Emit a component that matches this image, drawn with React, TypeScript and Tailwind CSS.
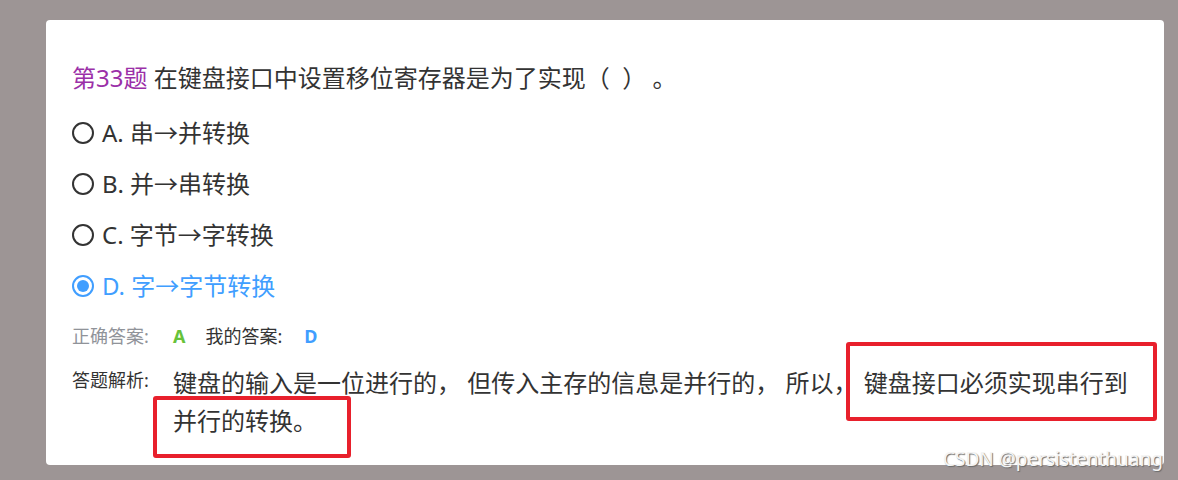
import React from 'react';

const options = [
  { key: 'A', text: '串→并转换' },
  { key: 'B', text: '并→串转换' },
  { key: 'C', text: '字节→字转换' },
  { key: 'D', text: '字→字节转换' },
];

function Radio({ checked }: { checked: boolean }) {
  if (checked) {
    return (
      <span className="w-[22px] h-[22px] rounded-full border-2 border-[#409eff] flex items-center justify-center shrink-0">
        <span className="w-[12px] h-[12px] rounded-full bg-[#409eff]"></span>
      </span>
    );
  }
  return <span className="w-[22px] h-[22px] rounded-full border-2 border-[#333333] shrink-0"></span>;
}

export default function App() {
  const mine = 'D';
  return (
    <div
      className="relative w-full h-[480px] bg-[#9d9595] pt-[20px] pl-[46px] overflow-hidden"
      style={{ fontFamily: '"Noto Sans", "Noto Sans CJK SC", sans-serif' }}
    >
      <div className="w-[1118px] h-[445px] bg-white rounded-[4px] pt-[40px] pl-[26px] pr-[24px]">
        <div className="text-[24px] leading-[36px] text-[#333333]">
          <span className="text-[#9b30a8]">第33题</span> 在键盘接口中设置移位寄存器是为了实现（&nbsp;&nbsp;）&nbsp;。
        </div>

        <div className="mt-[11px] flex flex-col">
          {options.map((o) => {
            const checked = o.key === mine;
            return (
              <div key={o.key} className="h-[51px] flex items-center gap-[8px]">
                <Radio checked={checked} />
                <span className={`text-[24px] ${checked ? 'text-[#409eff]' : 'text-[#333333]'}`}>
                  {o.key}. {o.text}
                </span>
              </div>
            );
          })}
        </div>

        <div className="h-[30px] mt-[10px] flex items-center text-[18px]">
          <span className="w-[101px] text-[#909399]">正确答案:</span>
          <span className="text-[#67c23a] font-bold">A</span>
          <span className="ml-[20px] text-[#333333]">我的答案:</span>
          <span className="ml-[22px] text-[#409eff] font-bold">D</span>
        </div>

        <div className="mt-[13px] flex items-start">
          <span className="w-[101px] shrink-0 text-[18px] leading-[32px] text-[#333333]">答题解析:</span>
          <p className="flex-1 text-[24px] leading-[38px] text-[#333333]">
            键盘的输入是一位进行的， 但传入主存的信息是并行的， 所以， 键盘接口必须实现串行到并行的转换。
          </p>
        </div>
      </div>

      <div className="absolute left-[846px] top-[342px] w-[311px] h-[79px] border-[4px] border-[#e8202c] rounded-[3px]"></div>
      <div className="absolute left-[153px] top-[396px] w-[198px] h-[62px] border-[4px] border-[#e8202c] rounded-[3px]"></div>

      <div className="absolute left-[943px] top-[446px] text-[19px] leading-[26px] text-[#f4f4f4] [text-shadow:1px_1px_1px_#6b6b6b]">
        CSDN @persistenthuang
      </div>
    </div>
  );
}
